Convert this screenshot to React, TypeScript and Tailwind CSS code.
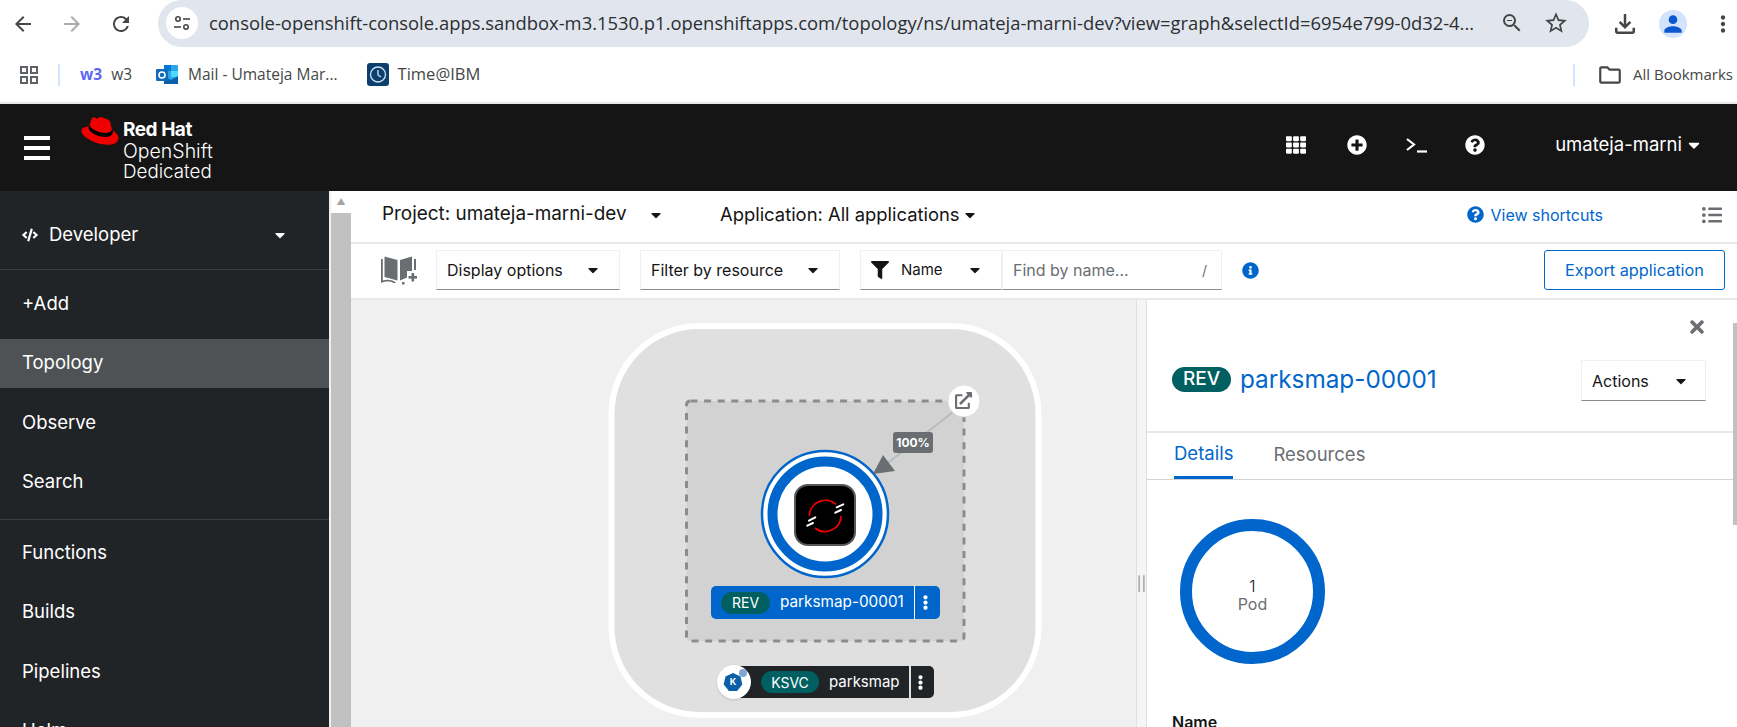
import {
  FaCaretDown,
  FaCode,
  FaEllipsisV,
  FaExternalLinkAlt,
  FaFilter,
  FaInfoCircle,
  FaListUl,
  FaPlusCircle,
  FaQuestionCircle,
  FaTh,
  FaTimes,
} from "react-icons/fa";
import {
  MdArrowBack,
  MdArrowForward,
  MdMoreVert,
  MdOutlineFileDownload,
  MdOutlineFolder,
  MdOutlineGridView,
  MdPerson,
  MdRefresh,
  MdStarBorder,
  MdZoomOut,
} from "react-icons/md";

const RedHatLogo = () => (
  <svg width="38" height="28" viewBox="0 0 38 28">
    <path
      d="M25 16c2.400 0 5.900-.5 5.900-3.400 0-.2 0-.5-.1-.7L29.400 5.600C29 4.100 28.700 3.500 26.300 2.300 24.400 1.300 20.300 0 19.100 0 18 0 17.700 1.400 16.300 1.400 15 1.400 14 .300 12.800.300c-1.200 0-1.900.8-2.500 2.400 0 0-1.600 4.600-1.800 5.300 0 .1 0 .3 0 .4 0 1.800 7 7.600 16.500 7.600z"
      fill="#ee0000"
    />
    <path
      d="M31.300 13.700c.3 1.600.3 1.700.3 1.900 0 2.700-3 4.200-7 4.200-9 0-16.900-5.300-16.900-8.800 0-.5.1-1 .3-1.400C4.800 9.800.500 10.400.500 14.100c0 6.100 14.500 13.700 26 13.700 8.800 0 11-4 11-7.100 0-2.500-2.100-5.300-6.200-7z"
      fill="#ee0000"
    />
    <path
      d="M31.300 13.700c.3 1.600.3 1.700.3 1.900 0 2.700-3 4.200-7 4.200-9 0-16.900-5.300-16.900-8.800 0-.5.1-1 .3-1.400l.7-1.600c0 .1 0 .3 0 .4 0 1.800 7 7.600 16.300 7.600 2.400 0 5.900-.5 5.900-3.400 0-.2 0-.5-.1-.7z"
      fill="#000000"
    />
  </svg>
);

const OutlookIcon = () => (
  <svg width="23" height="23" viewBox="0 0 23 23">
    <rect x="8" y="2" width="14" height="19" rx="1" fill="#28a8ea" />
    <rect x="8" y="2" width="7" height="6" fill="#0078d4" />
    <rect x="15" y="8" width="7" height="6" fill="#50d9ff" />
    <path d="M8 13l7 4 7-4v8H8z" fill="#0a5fa8" />
    <rect x="0" y="6" width="12" height="12" rx="1" fill="#0f6cbd" />
    <circle cx="6" cy="12" r="3" fill="none" stroke="#fff" strokeWidth="1.600" />
  </svg>
);

const ClockIcon = () => (
  <svg width="22" height="23" viewBox="0 0 22 23">
    <rect width="22" height="23" rx="3" fill="#0d3f6e" />
    <circle cx="11" cy="11.500" r="7.500" fill="none" stroke="#cfe3f5" strokeWidth="1.300" />
    <path d="M11 7v5l3 2" fill="none" stroke="#cfe3f5" strokeWidth="1.300" />
  </svg>
);

const TerminalIcon = () => (
  <svg width="22" height="16" viewBox="0 0 22 16" fill="none" stroke="#fff" strokeWidth="2.200">
    <path d="M1 2l7 5.500-7 5.500" />
    <path d="M11 14.500h10" />
  </svg>
);

const BookIcon = () => (
  <svg width="36" height="30" viewBox="0 0 36 30" fill="#6a6e73">
    <path d="M3.500 1.500L16.500 5v20.500L3.500 22z" />
    <path d="M19 5l12-3.500V16h-5v6.500l-7 3z" />
    <path d="M0 4h1.800v21.500c5-1.500 10-.5 13.500 2.500h-3c-3-1.800-7-2-12.300 0z" />
    <rect x="33" y="4" width="2" height="11" />
    <rect x="27.500" y="21" width="8.500" height="2.600" />
    <rect x="30.500" y="18" width="2.600" height="8.500" />
    <rect x="21" y="27" width="2.500" height="2.500" />
  </svg>
);

const Select = ({ label, width }: { label: string; width: string }) => (
  <div className={`flex items-center justify-between h-[40px] pl-[10px] pr-[18px] border border-[#f0f0f0] border-b-[#8a8d90] ${width}`}>
    <span className="text-[16px] text-[#151515]">{label}</span>
    <FaCaretDown className="text-[#151515] text-[16px]" />
  </div>
);

const navTop = ["+Add", "Topology", "Observe", "Search"];
const navBottom = ["Functions", "Builds", "Pipelines", "Helm"];

const NavItem = ({ label }: { label: string }) => (
  <div
    className={`h-[49px] mb-[10.500px] pl-[22px] flex items-center text-[18.500px] text-white ${
      label === "Topology" ? "bg-[#4f5255]" : ""
    }`}
  >
    {label}
  </div>
);

const Sidebar = () => (
  <aside className="w-[329px] shrink-0 bg-[#212427] overflow-hidden">
    <div className="h-[79px] pt-[9px] pl-[22px] pr-[41px] flex items-center justify-between border-b border-[#3c3f42]">
      <div className="flex items-center text-white text-[18.500px]">
        <FaCode className="text-[16px] mr-[11px]" />
        Developer
      </div>
      <FaCaretDown className="text-white text-[16px]" />
    </div>
    <div className="pt-[9px] border-b border-[#3c3f42] h-[250px]">
      {navTop.map((n) => (
        <NavItem key={n} label={n} />
      ))}
    </div>
    <div className="pt-[8px]">
      {navBottom.map((n) => (
        <NavItem key={n} label={n} />
      ))}
    </div>
  </aside>
);

const Topology = () => (
  <div className="relative w-[785px] shrink-0 bg-[#f0f0f0] overflow-hidden">
    <svg className="absolute inset-0" width="785" height="427" viewBox="351 300 785 427">
      <rect x="611.500" y="326" width="427" height="389" rx="88" fill="#e0e0e0" stroke="#fff" strokeWidth="6" />
      <rect
        x="686.500"
        y="401"
        width="277.500"
        height="240"
        rx="4"
        fill="#d2d2d2"
        stroke="#8a8d90"
        strokeWidth="3"
        strokeDasharray="7 6.600"
      />
      <line x1="953" y1="412" x2="884" y2="466" stroke="#b8bbbe" strokeWidth="2" />
      <circle cx="825" cy="514" r="63" fill="#fff" stroke="#06c" strokeWidth="2.500" />
      <circle cx="825" cy="514" r="52.500" fill="#fff" stroke="#06c" strokeWidth="10" />
      <path d="M873 474L883 455L895 471z" fill="#6a6e73" />
      <rect x="795" y="485" width="60" height="60" rx="13" fill="#000" stroke="#55585b" strokeWidth="2" />
      <path d="M809.300 516A16 16 0 0 1 836 504.400" fill="none" stroke="#ee0000" strokeWidth="1.800" />
      <path d="M841 516A16 16 0 0 1 815 528" fill="none" stroke="#ee0000" strokeWidth="1.800" />
      <g stroke="#fff" strokeWidth="2" strokeLinecap="round">
        <line x1="836.700" y1="507.300" x2="843.300" y2="504.300" />
        <line x1="835.300" y1="512.700" x2="841" y2="510" />
        <line x1="809" y1="520.700" x2="815.300" y2="517.300" />
        <line x1="807.300" y1="525.700" x2="813" y2="523" />
      </g>
      <circle cx="964" cy="401" r="16" fill="#fff" stroke="#e0e0e0" />
    </svg>

    <div className="absolute left-[604px] top-[92px] text-[#6a6e73] text-[17px]">
      <FaExternalLinkAlt />
    </div>
    <div className="absolute left-[542px] top-[132px] w-[40px] h-[21px] rounded-[3px] bg-[#6a6e73] text-white text-[12px] font-bold flex items-center justify-center">
      100%
    </div>

    <div className="absolute left-[360px] top-[286px] w-[229px] h-[33px] rounded-[5px] bg-[#06c] flex items-center text-white">
      <span className="ml-[10px] w-[49px] h-[22px] rounded-full bg-[#005f60] text-[14px] flex items-center justify-center">REV</span>
      <span className="ml-[10px] w-[134px] text-[15.300px]">parksmap-00001</span>
      <span className="w-px h-[33px] bg-white" />
      <FaEllipsisV className="ml-[3px] text-[15px]" />
    </div>

    <div className="absolute left-[380px] top-[366px] w-[203px] h-[32px] rounded-r-[5px] bg-[#212427] flex items-center text-white">
      <span className="ml-[30px] w-[58px] h-[22px] rounded-full bg-[#005f60] text-[14px] flex items-center justify-center">KSVC</span>
      <span className="ml-[10px] w-[80px] text-[15px]">parksmap</span>
      <span className="w-[2px] h-[32px] bg-[#e0e0e0]" />
      <FaEllipsisV className="ml-[2px] text-[15px]" />
    </div>
    <div className="absolute left-[366px] top-[365px] w-[34px] h-[34px] rounded-full bg-white shadow flex items-center justify-center">
      <div className="relative w-[22px] h-[20px]">
        <svg width="20" height="20" viewBox="0 0 20 20">
          <path d="M10 1l7.500 3.500 1.800 8-5.200 6.500H5.900L.700 12.500l1.800-8z" fill="#0b5ea8" />
        </svg>
        <span className="absolute left-0 top-[3px] w-[20px] text-center text-white text-[9px] font-bold">K</span>
        <span className="absolute right-[-2px] top-[-3px] w-[8px] h-[8px] rounded-full bg-[#7fa6d4]" />
      </div>
    </div>
  </div>
);

const DetailsPanel = () => (
  <section className="flex-1 min-w-0 bg-white flex">
    <div className="flex-1 min-w-0 overflow-hidden">
      <div className="h-[133px] relative border-b-2 border-[#e8e8e8] pl-[25px] pr-[27px] flex items-start justify-between">
        <FaTimes className="absolute right-[26px] top-[17px] text-[#6a6e73] text-[20px]" />
        <div className="flex items-center mt-[61px]">
          <span className="w-[59px] h-[25px] rounded-full bg-[#005f60] text-white text-[19px] font-medium flex items-center justify-center">REV</span>
          <span className="ml-[9px] text-[24.300px] text-[#06c]">parksmap-00001</span>
        </div>
        <div className="mt-[60px] w-[125px] h-[41px] pl-[10px] pr-[16px] border border-[#f0f0f0] border-b-[#8a8d90] flex items-center justify-between">
          <span className="text-[16px] text-[#151515]">Actions</span>
          <FaCaretDown className="text-[#151515] text-[16px]" />
        </div>
      </div>
      <div className="h-[47px] pl-[27px] flex border-b border-[#d2d2d2] text-[18.500px]">
        <span className="text-[#06c] h-[46px] pb-[2px] flex items-center border-b-[3px] border-[#06c]">Details</span>
        <span className="ml-[40px] text-[#6a6e73] h-[46px] pb-[2px] flex items-center">Resources</span>
      </div>
      <div className="pl-[25px] pt-[39px]">
        <div className="w-[145px] h-[145px] rounded-full border-[12px] border-[#06c] flex flex-col items-center justify-center pt-[6px] leading-[18px] ml-[8px]">
          <span className="text-[16px] text-[#151515] font-light">1</span>
          <span className="text-[16px] text-[#6a6e73]">Pod</span>
        </div>
        <div className="mt-[46px] text-[16px] font-semibold text-[#151515]">Name</div>
      </div>
    </div>
    <div className="w-[4px] shrink-0 bg-white pt-[23px]">
      <div className="h-[202px] bg-[#c1c1c1]" />
    </div>
  </section>
);

export default function App() {
  return (
    <div className="w-[1737px] h-[727px] overflow-hidden flex flex-col bg-white font-['Inter',sans-serif]">
      {/* browser toolbar */}
      <div className="h-[47px] shrink-0 flex items-center font-['Open_Sans',sans-serif]">
        <div className="w-[158px] pl-[11px] flex items-center gap-[25px] text-[24px]">
          <MdArrowBack className="text-[#444746]" />
          <MdArrowForward className="text-[#a9abad]" />
          <MdRefresh className="text-[#444746]" />
        </div>
        <div className="w-[1431px] h-[47px] -mt-[1px] rounded-full bg-[#e1e6ee] flex items-center pl-[8px] shrink-0">
          <div className="w-[32px] h-[32px] rounded-full bg-white flex items-center justify-center shrink-0">
            <svg width="18" height="16" viewBox="0 0 18 16" fill="none" stroke="#444746" strokeWidth="1.600">
              <circle cx="5" cy="4" r="2.200" />
              <path d="M10 4h7" />
              <path d="M1 12h7" />
              <circle cx="13" cy="12" r="2.200" />
            </svg>
          </div>
          <span className="ml-[11px] w-[1268px] shrink-0 whitespace-nowrap overflow-hidden text-[18.400px] text-[#2c2e31]">
            console-openshift-console.apps.sandbox-m3.1530.p1.openshiftapps.com/topology/ns/umateja-marni-dev?view=graph&amp;selectId=6954e799-0d32-4...
          </span>
          <MdZoomOut className="ml-[23px] text-[24px] text-[#444746] shrink-0" />
          <MdStarBorder className="ml-[19px] text-[26px] text-[#444746] shrink-0" />
        </div>
        <MdOutlineFileDownload className="ml-[21px] text-[30px] text-[#444746]" />
        <div className="ml-[19px] w-[28px] h-[28px] rounded-full bg-[#d3e3fd] flex items-center justify-center">
          <MdPerson className="text-[26px] text-[#0b57d0]" />
        </div>
        <MdMoreVert className="ml-[23px] text-[26px] text-[#444746]" />
      </div>

      {/* bookmarks */}
      <div className="h-[55px] shrink-0 flex items-center text-[15.500px] text-[#444746] font-['Open_Sans',sans-serif]">
        <MdOutlineGridView className="ml-[17px] text-[24px] text-[#5f6368]" />
        <span className="ml-[17px] w-[2px] h-[22px] bg-[#d3e3fd]" />
        <span className="ml-[20px] font-bold text-[#5c67f2]">w3</span>
        <span className="ml-[9px]">w3</span>
        <span className="ml-[24px]"><OutlookIcon /></span>
        <span className="ml-[9px]">Mail - Umateja Mar...</span>
        <span className="ml-[29px]"><ClockIcon /></span>
        <span className="ml-[9px] text-[16.500px]">Time@IBM</span>
        <span className="ml-auto w-[2px] h-[22px] bg-[#d3e3fd]" />
        <MdOutlineFolder className="ml-[22px] text-[26px]" />
        <span className="ml-[10px] mr-[4px] text-[15px]">All Bookmarks</span>
      </div>
      <div className="h-[2px] shrink-0 bg-[#e8e8e8]" />

      {/* masthead */}
      <header className="h-[87px] shrink-0 bg-[#151515] flex items-center text-white">
        <div className="ml-[24px] w-[26px] flex flex-col gap-[6px]">
          <span className="h-[4px] bg-white" />
          <span className="h-[4px] bg-white" />
          <span className="h-[4px] bg-white" />
        </div>
        <div className="ml-[31px] self-start mt-[13px]">
          <RedHatLogo />
        </div>
        <div className="ml-[4px] mt-[6px] flex flex-col gap-[1px] leading-[20px]">
          <div className="text-[19px] font-bold tracking-tight">Red Hat</div>
          <div className="text-[19.500px] font-light">OpenShift</div>
          <div className="text-[18.800px] font-light">Dedicated</div>
        </div>
        <div className="ml-auto flex items-center pb-[5px]">
          <FaTh className="text-[20px]" />
          <FaPlusCircle className="ml-[41px] text-[20px]" />
          <span className="ml-[39px]"><TerminalIcon /></span>
          <FaQuestionCircle className="ml-[37px] text-[20px]" />
          <span className="ml-[70px] text-[18.500px]">umateja-marni</span>
          <FaCaretDown className="ml-[3px] mr-[34px] text-[18px]" />
        </div>
      </header>

      <div className="flex-1 min-h-0 flex">
        <Sidebar />
        <div className="w-[22px] shrink-0 bg-white border-l-2 border-[#f0f0f0] flex flex-col">
          <div className="h-[22px] flex items-center justify-center text-[#a3a3a3] text-[9px]">▲</div>
          <div className="flex-1 bg-[#c1c1c1]" />
        </div>

        <main className="flex-1 min-w-0 flex flex-col">
          {/* project bar */}
          <div className="h-[53px] shrink-0 border-b-2 border-[#e8e8e8] flex items-center text-[#151515] pl-[31px] pb-[4px]">
            <span className="w-[266px] text-[18.900px]">Project: umateja-marni-dev</span>
            <FaCaretDown className="text-[16px]" />
            <span className="ml-[56px] text-[18.400px]">Application: All applications</span>
            <FaCaretDown className="ml-[2px] text-[16px]" />
            <FaQuestionCircle className="ml-auto text-[#06c] text-[17px]" />
            <span className="ml-[6px] text-[#06c] text-[16px]">View shortcuts</span>
            <FaListUl className="ml-[99px] mr-[15px] text-[#6a6e73] text-[20px]" />
          </div>

          {/* toolbar */}
          <div className="h-[56px] shrink-0 border-b-2 border-[#e8e8e8] flex items-center pl-[30px] pb-[2px]">
            <BookIcon />
            <div className="ml-[19px]"><Select label="Display options" width="w-[184px]" /></div>
            <div className="ml-[20px]"><Select label="Filter by resource" width="w-[200px]" /></div>
            <div className="ml-[20px] w-[142px] h-[40px] pl-[10px] pr-[18px] flex items-center border border-[#f0f0f0] border-b-[#8a8d90]">
              <FaFilter className="text-[18px] text-[#151515]" />
              <span className="ml-[12px] text-[15px] text-[#151515]">Name</span>
              <FaCaretDown className="ml-auto text-[16px] text-[#151515]" />
            </div>
            <div className="w-[220px] h-[40px] pl-[10px] pr-[14px] flex items-center justify-between border border-[#f0f0f0] border-b-[#8a8d90] text-[16px] text-[#6a6e73]">
              <span>Find by name...</span>
              <span className="text-[14px]">/</span>
            </div>
            <FaInfoCircle className="ml-[20px] text-[#06c] text-[17px]" />
            <div className="ml-auto mr-[12px] w-[181px] h-[40px] rounded-[3px] border border-[#06c] text-[#06c] text-[16.300px] flex items-center justify-center">
              Export application
            </div>
          </div>

          <div className="flex-1 min-h-0 flex">
            <Topology />
            <div className="w-[11px] shrink-0 bg-[#f5f5f5] border-x border-[#e0e0e0] flex items-center justify-center text-[#8a8d90] text-[14px] pt-[140px]">
              ||
            </div>
            <DetailsPanel />
          </div>
        </main>
      </div>
    </div>
  );
}
